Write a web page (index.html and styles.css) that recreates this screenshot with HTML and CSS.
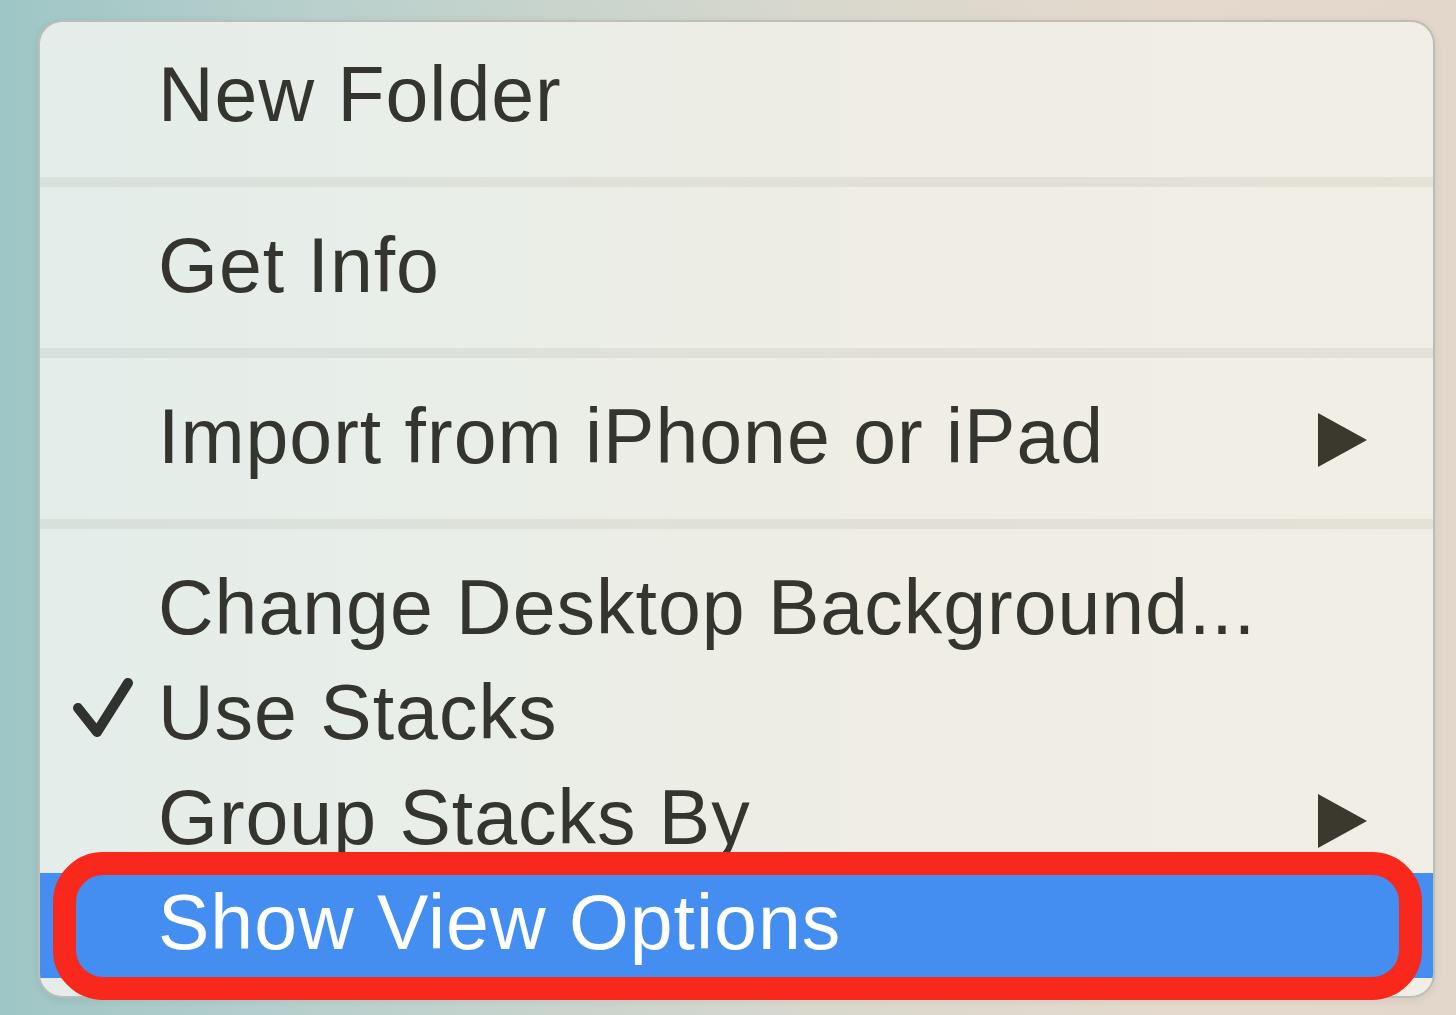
FILE: index.html
```html
<!DOCTYPE html>
<html lang="en">
<head>
    <meta charset="UTF-8">
    <meta name="viewport" content="width=device-width, initial-scale=1.0">
    <title>Desktop Context Menu</title>
    <link rel="stylesheet" href="styles.css">
</head>
<body>
    <div class="desktop">
        <div class="menu">
            <div class="item">
                <span class="gutter"></span>
                <span class="label">New Folder</span>
            </div>
            <div class="sep"></div>
            <div class="item">
                <span class="gutter"></span>
                <span class="label">Get Info</span>
            </div>
            <div class="sep"></div>
            <div class="item">
                <span class="gutter"></span>
                <span class="label">Import from iPhone or iPad</span>
                <svg class="submenu" viewBox="0 0 49 54"><polygon points="0,0 49,27 0,54"/></svg>
            </div>
            <div class="sep"></div>
            <div class="item">
                <span class="gutter"></span>
                <span class="label">Change Desktop Background...</span>
            </div>
            <div class="item">
                <span class="gutter">
                    <svg class="check" viewBox="0 0 62 62"><polyline points="6,31 25,55 56,6"/></svg>
                </span>
                <span class="label">Use Stacks</span>
            </div>
            <div class="item">
                <span class="gutter"></span>
                <span class="label">Group Stacks By</span>
                <svg class="submenu" viewBox="0 0 49 54"><polygon points="0,0 49,27 0,54"/></svg>
            </div>
            <div class="item active">
                <span class="gutter"></span>
                <span class="label">Show View Options</span>
            </div>
        </div>
        <!-- annotation ring around the highlighted item -->
        <div class="callout"></div>
    </div>
</body>
</html>
```

FILE: styles.css
```css
body {
    margin: 0;
    font-family: "Liberation Sans", Arial, sans-serif;
}

.desktop {
    position: relative;
    width: 1456px;
    height: 1015px;
    padding: 20px 0 0 38px;
    box-sizing: border-box;
    background: linear-gradient(90deg, #9ec6c6 0%, #b9d0cc 22%, #d8d8cd 55%, #e4d9cc 80%, #e2d7ca 100%);
    overflow: hidden;
}

.menu {
    width: 1397px;
    box-sizing: border-box;
    padding: 23px 0 18px;
    border: 2px solid rgba(90, 90, 80, 0.32);
    border-radius: 24px;
    background: linear-gradient(90deg, #e4edea 0%, #e9eee8 30%, #efede4 60%, #f1eee5 100%);
    box-shadow: 0 2px 8px rgba(0, 0, 0, 0.08);
    overflow: hidden;
    color: #35352f;
}

.item {
    display: flex;
    height: 105px;
    font-size: 77px;
}

.gutter {
    flex: none;
    width: 118px;
    box-sizing: border-box;
    padding-left: 32px;
    display: flex;
    align-items: center;
}

.label {
    flex: 1;
    line-height: 99px;
    letter-spacing: 1px;
    white-space: nowrap;
}

.check {
    width: 62px;
    height: 62px;
    margin-top: -16px;
    fill: none;
    stroke: #2f322f;
    stroke-width: 10;
    stroke-linecap: round;
    stroke-linejoin: round;
}

.submenu {
    flex: none;
    align-self: center;
    width: 49px;
    height: 54px;
    margin-right: 66px;
    fill: #3b382e;
}

.sep {
    height: 10px;
    margin: 27px 0 29px;
    background: rgba(120, 115, 95, 0.1);
}

.item.active {
    background: #448ef1;
    color: #fff;
}

.callout {
    position: absolute;
    left: 53px;
    top: 852px;
    width: 1369px;
    height: 148px;
    box-sizing: border-box;
    border: 23px solid #f8281c;
    border-radius: 50px;
}
```
